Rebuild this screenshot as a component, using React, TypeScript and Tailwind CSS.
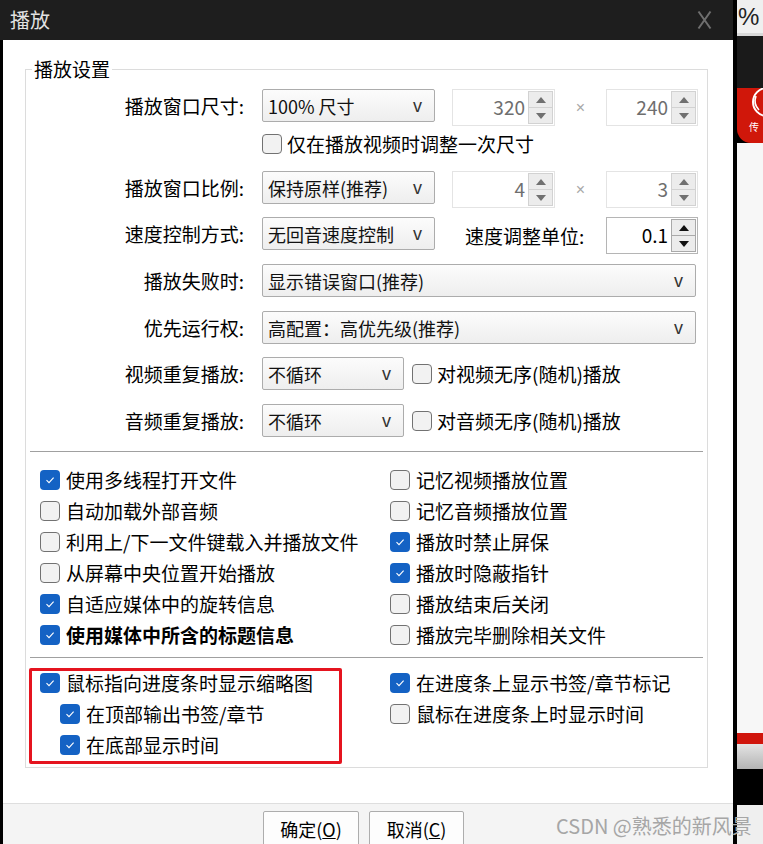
import React from "react";

const F = "font-['Noto_Sans_CJK_SC',sans-serif]";

function Check({ checked, className = "" }: { checked: boolean; className?: string }) {
  return checked ? (
    <div className={`w-[20px] h-[20px] shrink-0 rounded-[4px] bg-[#1462c4] flex items-center justify-center ${className}`}>
      <svg width="12" height="12" viewBox="0 0 12 12">
        <path d="M2.5 6.2 L5 8.6 L9.6 3.6" fill="none" stroke="#fff" strokeWidth="1.1" />
      </svg>
    </div>
  ) : (
    <div className={`w-[20px] h-[20px] shrink-0 rounded-[4px] bg-[#f2f2f2] border border-[#727272] ${className}`} />
  );
}

function Tri({ up, color }: { up: boolean; color: string }) {
  return (
    <svg width="10" height="6" viewBox="0 0 10 6">
      <polygon points={up ? "0,6 10,6 5,0" : "0,0 10,0 5,6"} fill={color} />
    </svg>
  );
}

function Spin({ value, enabled = false, className = "" }: { value: string; enabled?: boolean; className?: string }) {
  const tri = enabled ? "#111" : "#707070";
  return (
    <div className={`flex h-[37px] bg-white border ${enabled ? "border-[#b5b5b5]" : "border-[#e4e4e4]"} ${className}`}>
      <div className={`flex-1 flex items-center justify-end pr-[3px] text-[19px] ${enabled ? "text-black" : "text-[#6e6e6e]"}`}>{value}</div>
      <div className="w-[26px] flex flex-col py-[1px] pr-[1px]">
        <div className={`flex-1 border ${enabled ? "border-[#a9a9a9]" : "border-[#d2d2d2]"} bg-[#ececec] flex items-center justify-center`}>
          <Tri up color={tri} />
        </div>
        <div className={`flex-1 border border-t-0 ${enabled ? "border-[#a9a9a9]" : "border-[#d2d2d2]"} bg-[#ececec] flex items-center justify-center`}>
          <Tri up={false} color={tri} />
        </div>
      </div>
    </div>
  );
}

function Select({ text, className = "" }: { text: string; className?: string }) {
  return (
    <div className={`h-[33px] shrink-0 border border-[#acacac] rounded-[2px] bg-linear-to-b from-[#fcfcfc] to-[#eeeeee] flex items-center justify-between pl-[5px] pr-[12px] ${className}`}>
      <span className="text-[18px] leading-[22px] text-[#111]">{text}</span>
      <span className="font-['Liberation_Sans',sans-serif] text-[18px] leading-[22px] text-[#333]">v</span>
    </div>
  );
}

function Label({ children }: { children: React.ReactNode }) {
  return <div className="w-[218px] h-[33px] shrink-0 flex items-center justify-end text-[19px] leading-[22px] text-black">{children}</div>;
}

function Item({ checked, text, bold = false, className = "" }: { checked: boolean; text: string; bold?: boolean; className?: string }) {
  return (
    <div className={`h-[31px] flex items-center gap-[6px] ${className}`}>
      <Check checked={checked} />
      <span className={`text-[19px] leading-[22px] text-black whitespace-nowrap ${bold ? "font-bold" : ""}`}>{text}</span>
    </div>
  );
}

const Times = () => <div className="w-[51px] shrink-0 h-[37px] flex items-center justify-center text-[#a8a8a8] text-[16px] font-['Liberation_Sans',sans-serif]">×</div>;

export default function App() {
  return (
    <div className={`relative w-[763px] h-[844px] bg-black flex overflow-hidden ${F}`}>
      {/* dialog */}
      <div className="w-[733px] h-full flex flex-col">
        <div className="h-[40px] shrink-0 bg-[#1e1e1e] flex items-center justify-between pl-[10px] pr-[21px]">
          <span className="text-[20px] leading-[24px] text-[#e2e2e2]">播放</span>
          <svg width="15" height="20" viewBox="0 0 15 20">
            <path d="M1.5 1.5 L13.5 18.5 M13.5 1.5 L1.5 18.5" stroke="#6f6f6f" strokeWidth="2" fill="none" />
          </svg>
        </div>
        <div className="flex-1 flex flex-col bg-white border-l-[3px] border-black">
          <div className="flex-1 pl-[22px] pr-[25px]">
            <fieldset className="mt-[18px] border border-[#dcdcdc] pb-[7px]">
              <legend className="ml-[6px] px-[2px] text-[19px] leading-[22px] text-black">播放设置</legend>

              <div className="flex items-start mt-[9px]">
                <Label>播放窗口尺寸:</Label>
                <Select text="100% 尺寸" className="ml-[18px] w-[173px]" />
                <Spin value="320" className="ml-[17px] w-[103px]" />
                <Times />
                <Spin value="240" className="w-[92px]" />
              </div>

              <div className="flex items-center h-[22px] mt-[7px] ml-[236px] gap-[5px]">
                <Check checked={false} />
                <span className="text-[19px] leading-[22px] text-black">仅在播放视频时调整一次尺寸</span>
              </div>

              <div className="flex items-start mt-[16px]">
                <Label>播放窗口比例:</Label>
                <Select text="保持原样(推荐)" className="ml-[18px] w-[173px]" />
                <Spin value="4" className="ml-[17px] w-[103px]" />
                <Times />
                <Spin value="3" className="w-[92px]" />
              </div>

              <div className="flex items-start mt-[9px]">
                <Label>速度控制方式:</Label>
                <Select text="无回音速度控制" className="ml-[18px] w-[173px]" />
                <div className="ml-[30px] w-[141px] h-[37px] flex items-center text-[19px] leading-[22px] text-black">速度调整单位:</div>
                <Spin value="0.1" enabled className="w-[92px]" />
              </div>

              <div className="flex items-start mt-[10px]">
                <Label>播放失败时:</Label>
                <Select text="显示错误窗口(推荐)" className="ml-[18px] w-[434px]" />
              </div>

              <div className="flex items-start mt-[14px]">
                <Label>优先运行权:</Label>
                <Select text="高配置：高优先级(推荐)" className="ml-[18px] w-[434px]" />
              </div>

              <div className="flex items-center mt-[13px]">
                <Label>视频重复播放:</Label>
                <Select text="不循环" className="ml-[18px] w-[142px]" />
                <div className="ml-[8px] flex items-center gap-[5px]">
                  <Check checked={false} className="w-[19px]" />
                  <span className="text-[19px] leading-[22px] text-black">对视频无序(随机)播放</span>
                </div>
              </div>

              <div className="flex items-center mt-[14px]">
                <Label>音频重复播放:</Label>
                <Select text="不循环" className="ml-[18px] w-[142px]" />
                <div className="ml-[8px] flex items-center gap-[5px]">
                  <Check checked={false} className="w-[19px]" />
                  <span className="text-[19px] leading-[22px] text-black">对音频无序(随机)播放</span>
                </div>
              </div>

              <div className="mt-[14px] mx-[4px] h-px bg-[#a0a0a0]" />

              <div className="mt-[12px] pl-[14px] grid grid-cols-[350px_1fr]">
                <div className="flex flex-col">
                  <Item checked text="使用多线程打开文件" />
                  <Item checked={false} text="自动加载外部音频" />
                  <Item checked={false} text="利用上/下一文件键载入并播放文件" />
                  <Item checked={false} text="从屏幕中央位置开始播放" />
                  <Item checked text="自适应媒体中的旋转信息" />
                  <Item checked bold text="使用媒体中所含的标题信息" />
                </div>
                <div className="flex flex-col">
                  <Item checked={false} text="记忆视频播放位置" />
                  <Item checked={false} text="记忆音频播放位置" />
                  <Item checked text="播放时禁止屏保" />
                  <Item checked text="播放时隐蔽指针" />
                  <Item checked={false} text="播放结束后关闭" />
                  <Item checked={false} text="播放完毕删除相关文件" />
                </div>
              </div>

              <div className="mt-[7px] mx-[4px] h-px bg-[#a0a0a0]" />

              <div className="relative mt-[9px] pl-[14px] grid grid-cols-[350px_1fr]">
                <div className="flex flex-col">
                  <Item checked text="鼠标指向进度条时显示缩略图" />
                  <Item checked text="在顶部输出书签/章节" className="ml-[20px]" />
                  <Item checked text="在底部显示时间" className="ml-[20px]" />
                </div>
                <div className="flex flex-col">
                  <Item checked text="在进度条上显示书签/章节标记" />
                  <Item checked={false} text="鼠标在进度条上时显示时间" />
                </div>
                <div className="absolute left-[3px] top-[1px] w-[313px] h-[96px] border-[3px] border-[#e5141f] rounded-[2px] pointer-events-none" />
              </div>
            </fieldset>
          </div>
          <div className="h-[41px] shrink-0 bg-[#f4f4f4] border-t border-[#dedede] flex items-start pt-[7px] pl-[260px] gap-[10px]">
            <div className="w-[96px] h-[36px] border border-[#adadad] bg-[#fdfdfd] rounded-[2px] flex items-center justify-center text-[18px] leading-[22px] text-black">
              确定(<span className="underline">O</span>)
            </div>
            <div className="w-[95px] h-[36px] border border-[#adadad] bg-[#fdfdfd] rounded-[2px] flex items-center justify-center text-[18px] leading-[22px] text-black">
              取消(<span className="underline">C</span>)
            </div>
          </div>
        </div>
      </div>

      {/* background window on right */}
      <div className="ml-[4px] w-[26px] h-full flex flex-col">
        <div className="h-[33px] bg-[#efefef] flex items-center overflow-hidden">
          <span className="font-['Liberation_Sans',sans-serif] text-[24px] text-[#222] ml-[1px]">%</span>
        </div>
        <div className="h-[3px] bg-[#d8d8d8]" />
        <div className="h-[52px] bg-[#1a1a1a]" />
        <div className="h-[55px] bg-[#d0170a] rounded-bl-[14px] relative overflow-hidden">
          <svg width="26" height="55" viewBox="0 0 26 55" className="absolute left-0 top-0">
            <circle cx="30" cy="14" r="14" fill="none" stroke="#fff" strokeWidth="2" />
            <path d="M19 8 Q16 16 22 22" fill="none" stroke="#fff" strokeWidth="1.6" />
          </svg>
          <span className="absolute left-[12px] top-[33px] text-[10px] leading-[12px] text-white">传</span>
        </div>
        <div className="flex-1 bg-[#f7f7f7]" />
        <div className="h-[11px] bg-[#d0150c]" />
        <div className="h-[25px] bg-linear-to-b from-[#e4e4e4] to-[#b4b4b4]" />
        <div className="h-[36px] bg-black" />
        <div className="h-[39px] bg-[#efefef]" />
      </div>

      <div className="absolute left-[556px] top-[814px] text-[20px] leading-[24px] text-[#a6a6a6] whitespace-nowrap pointer-events-none">
        CSDN @熟悉的新风景
      </div>
    </div>
  );
}
